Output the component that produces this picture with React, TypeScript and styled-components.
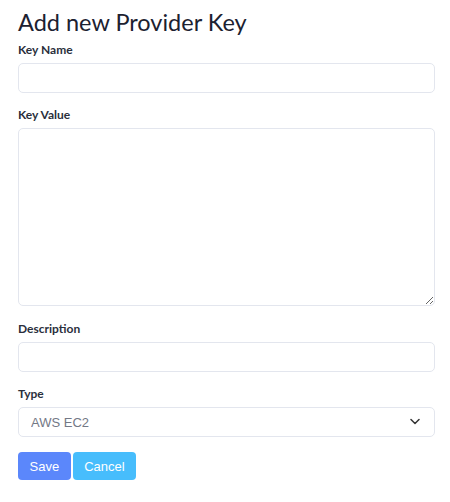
import React from "react";
import styled, { createGlobalStyle } from "styled-components";

const Global = createGlobalStyle`
  html, body { margin: 0; padding: 0; background: #ffffff; }
  * { box-sizing: border-box; }
`;

const Page = styled.div`
  padding: 6px 15px 20px 18px;
  display: flex;
  flex-direction: column;
  font-family: "Lato", "Liberation Sans", sans-serif;
  color: #1f2433;
`;

const Title = styled.h1`
  margin: 0 0 4px 0;
  font-size: 23.5px;
  line-height: 32px;
  font-weight: 400;
  color: #1c2130;
`;

const Field = styled.div<{ $gap?: number }>`
  display: flex;
  flex-direction: column;
  margin-bottom: ${(p) => p.$gap ?? 14}px;
`;

const Label = styled.label`
  font-size: 12px;
  line-height: 16px;
  font-weight: 700;
  color: #2a2f3c;
  margin-bottom: 5px;
`;

const TextInput = styled.input`
  height: 30px;
  width: 100%;
  border: 1px solid #e3e6ee;
  border-radius: 5px;
  padding: 0 12px;
  font-family: "Liberation Sans", sans-serif;
  font-size: 13px;
  outline: none;
  background: #fff;
`;

const TextArea = styled.textarea`
  height: 178px;
  width: 100%;
  border: 1px solid #e3e6ee;
  border-radius: 5px;
  padding: 8px 12px;
  font-family: "Liberation Sans", sans-serif;
  font-size: 13px;
  outline: none;
  display: block;
  resize: vertical;
`;

const SelectWrap = styled.div`
  position: relative;
  width: 100%;
`;

const Select = styled.select`
  appearance: none;
  height: 30px;
  width: 100%;
  border: 1px solid #e3e6ee;
  border-radius: 5px;
  padding: 0 12px;
  font-family: "Liberation Sans", sans-serif;
  font-size: 13px;
  color: #737886;
  background: #fff;
  outline: none;
`;

const Chevron = styled.svg`
  position: absolute;
  right: 15px;
  top: 11px;
  pointer-events: none;
`;

const Buttons = styled.div`
  display: flex;
  gap: 2px;
`;

const Button = styled.button<{ $variant: "primary" | "info" }>`
  height: 28px;
  padding: 0 11.5px;
  border: none;
  border-radius: 4px;
  font-family: "Liberation Sans", sans-serif;
  font-size: 13px;
  color: #ffffff;
  background: ${(p) => (p.$variant === "primary" ? "#5b87fb" : "#47bdfc")};
  cursor: pointer;
`;

export default function App() {
  return (
    <>
      <Global />
      <Page>
        <Title>Add new Provider Key</Title>
        <Field>
          <Label>Key Name</Label>
          <TextInput />
        </Field>
        <Field $gap={15}>
          <Label>Key Value</Label>
          <TextArea />
        </Field>
        <Field>
          <Label>Description</Label>
          <TextInput />
        </Field>
        <Field $gap={15}>
          <Label>Type</Label>
          <SelectWrap>
            <Select defaultValue="aws">
              <option value="aws">AWS EC2</option>
            </Select>
            <Chevron width="10" height="7" viewBox="0 0 10 7">
              <path d="M1 1.5l4 4 4-4" fill="none" stroke="#333" strokeWidth="1.5" strokeLinecap="round" strokeLinejoin="round" />
            </Chevron>
          </SelectWrap>
        </Field>
        <Buttons>
          <Button $variant="primary">Save</Button>
          <Button $variant="info">Cancel</Button>
        </Buttons>
      </Page>
    </>
  );
}
